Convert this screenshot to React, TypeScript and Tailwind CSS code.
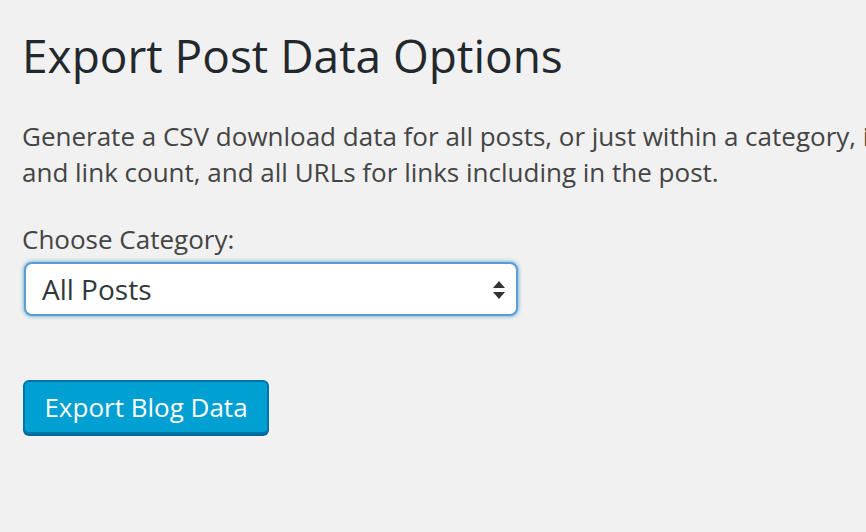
import React from 'react';

const App: React.FC = () => {
  return (
    <div className="min-h-[532px] w-full overflow-hidden bg-[#f1f1f1] font-['Open_Sans',sans-serif] text-[#444]">
      <div className="pl-[22px] pt-[26px]">
        <h1 className="text-[46px] font-normal leading-[58px] text-[#23282d]">
          Export Post Data Options
        </h1>

        <p className="mt-[34px] whitespace-nowrap text-[26px] leading-[36px]">
          Generate a CSV download data for all posts, or just within a category, including post title, word count
          <br />
          and link count, and all URLs for links including in the post.
        </p>

        <label className="mt-[31px] block text-[26px] leading-[36px]">Choose Category:</label>

        <div className="relative ml-[2px] mt-[5px] w-[494px]">
          <select className="h-[54px] w-full appearance-none rounded-[8px] border-2 border-[#5b9dd9] bg-white pl-[16px] text-[28px] text-[#32373c] shadow-[0_0_4px_rgba(30,140,190,0.8)] outline-none">
            <option>All Posts</option>
          </select>
          <svg
            className="pointer-events-none absolute right-[13px] top-[19px]"
            width="12"
            height="18"
            viewBox="0 0 12 18"
          >
            <path d="M6 0 L12 7 L0 7 Z" fill="#333" />
            <path d="M0 11 L12 11 L6 18 Z" fill="#333" />
          </svg>
        </div>

        <button className="ml-[1px] mt-[64px] h-[54px] w-[246px] rounded-[6px] border-2 border-[#0073aa] bg-[#00a0d2] text-[26px] text-white shadow-[0_2px_0_#006799]">
          Export Blog Data
        </button>
      </div>
    </div>
  );
};

export default App;
